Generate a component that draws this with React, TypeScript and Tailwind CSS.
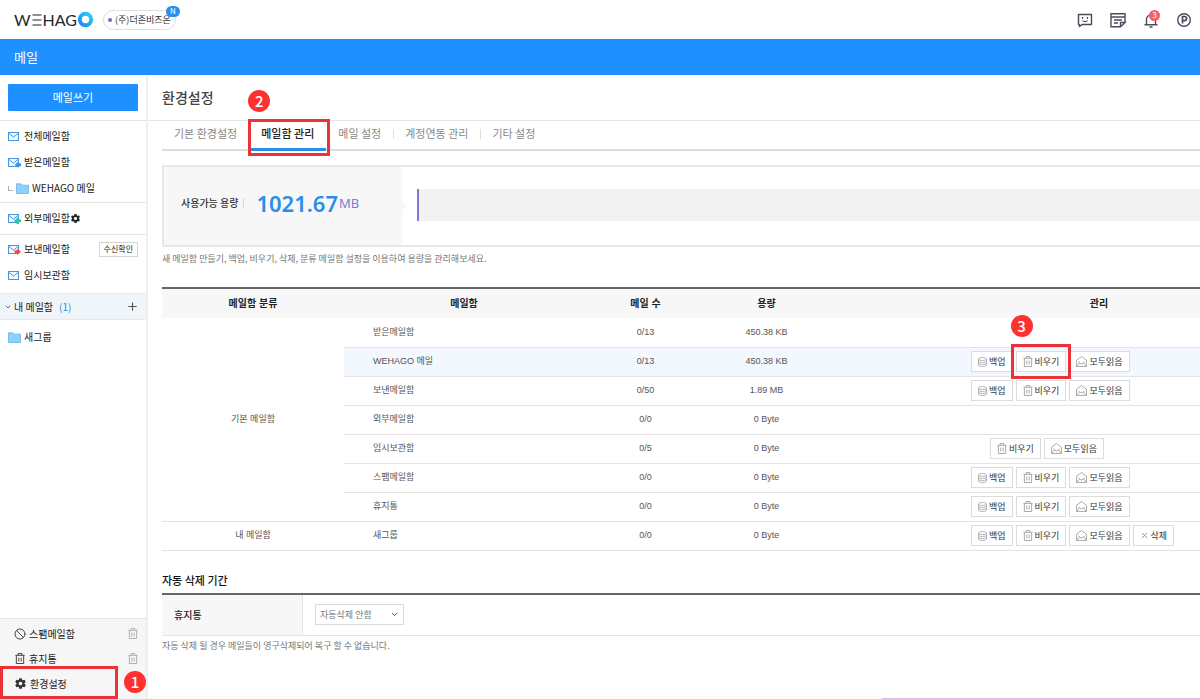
import { type ReactNode } from "react";
import clsx from "clsx";
import { Plus, ChevronDown, Ban, X } from "lucide-react";
import { IoMdSettings } from "react-icons/io";

type MailBadge = "none" | "in" | "external" | "out";

interface Mailbox {
  nome: string;
  count: string;
  size: string;
  actions: string[];
  active?: boolean;
}

const basicBoxes: Mailbox[] = [
  { nome: "받은메일함", count: "0/13", size: "450.38 KB", actions: [] },
  { nome: "WEHAGO 메일", count: "0/13", size: "450.38 KB", actions: ["백업", "비우기", "모두읽음"], active: true },
  { nome: "보낸메일함", count: "0/50", size: "1.89 MB", actions: ["백업", "비우기", "모두읽음"] },
  { nome: "외부메일함", count: "0/0", size: "0 Byte", actions: [] },
  { nome: "임시보관함", count: "0/5", size: "0 Byte", actions: ["비우기", "모두읽음"] },
  { nome: "스팸메일함", count: "0/0", size: "0 Byte", actions: ["백업", "비우기", "모두읽음"] },
  { nome: "휴지통", count: "0/0", size: "0 Byte", actions: ["백업", "비우기", "모두읽음"] },
];

const myBoxes: Mailbox[] = [
  { nome: "새그룹", count: "0/0", size: "0 Byte", actions: ["백업", "비우기", "모두읽음", "삭제"] },
];

const tabs = ["기본 환경설정", "메일함 관리", "메일 설정", "계정연동 관리", "기타 설정"];

function MailIcon({ badge = "none" }: { badge?: MailBadge }) {
  return (
    <svg width="13" height="11" viewBox="0 0 13 11" fill="none" className="shrink-0">
      <rect x="0.5" y="1.5" width="10" height="8" stroke="#4a94dc" fill="#f4faff" />
      <path d="M1 2.5l4.5 3.6L10 2.5" stroke="#4a94dc" />
      {badge === "in" && <path d="M13 6.3h-2.6V4.5L6.600 7.700l3.800 3.200V9.300H13z" fill="#2f9bea" />}
      {badge === "external" && <path d="M8.500 4.500h2.500v2h2V9h-2v2H8.500V9h-2V6.500h2z" fill="#1fc7a6" />}
      {badge === "out" && <path d="M6.600 6.300h2.600V4.500l3.800 3.200-3.800 3.200V9.300H6.600z" fill="#f04848" />}
    </svg>
  );
}

function FolderIcon() {
  return (
    <svg width="13" height="11" viewBox="0 0 13 11" className="shrink-0">
      <path d="M.5.8h4.3l1 1.4h6.7v8.3H.5z" fill="#8fd0fb" stroke="#62b4ee" strokeWidth="0.8" />
    </svg>
  );
}

function TrashIcon({ className }: { className?: string }) {
  return (
    <svg width="10" height="11" viewBox="0 0 11 12" fill="none" stroke="currentColor" className={clsx("shrink-0", className)}>
      <path d="M.5 2.5h10M3.5 2.5v-2h4v2M1.5 2.5v9h8v-9M4.2 5v4.3M6.8 5v4.3" />
    </svg>
  );
}

function DiskIcon() {
  return (
    <svg width="9" height="10" viewBox="0 0 9 10" fill="none" stroke="#a5a5a5" strokeWidth="0.8" className="shrink-0">
      <ellipse cx="4.5" cy="2" rx="4" ry="1.5" />
      <path d="M.5 2v6c0 .8 1.8 1.5 4 1.5s4-.7 4-1.5V2M.5 4c0 .8 1.8 1.5 4 1.5s4-.7 4-1.5M.5 6c0 .8 1.8 1.5 4 1.5s4-.7 4-1.5" />
    </svg>
  );
}

function OpenMailIcon() {
  return (
    <svg width="11" height="11" viewBox="0 0 12 12" fill="none" stroke="#999" strokeWidth="0.9" className="shrink-0">
      <path d="M.6 4.600L6 .6l5.400 4v6.800H.6z" />
      <path d="M.6 11.400L4 7.500M11.400 11.400L8 7.500M2.500 6.500L4 7.500l2 1.500 2-1.500 1.500-1" />
    </svg>
  );
}

function StepBadge({ n, className }: { n: number; className: string }) {
  return (
    <span className={clsx("absolute z-10 flex size-[22px] items-center justify-center rounded-full bg-[#ff3030] pb-px text-[15px] leading-none font-medium text-white", className)}>
      {n}
    </span>
  );
}

function HighlightBox({ className }: { className: string }) {
  return <span className={clsx("pointer-events-none absolute z-10 border-[3px] border-[#ec3236]", className)} />;
}

function ActionButton({ label, marked }: { label: string; marked?: boolean }) {
  return (
    <span className="relative flex">
      <button type="button" className="flex h-[21px] items-center gap-[2px] border border-[#dcdcdc] bg-white px-[6px] text-[9px] whitespace-nowrap text-[#333]">
        {label === "백업" && <DiskIcon />}
        {label === "비우기" && <TrashIcon className="text-[#a0a0a0]" />}
        {label === "모두읽음" && <OpenMailIcon />}
        {label === "삭제" && <X size={9} color="#777" />}
        {label}
      </button>
      {marked && (
        <>
          <HighlightBox className="-inset-x-[5px] -inset-y-[7px]" />
          <StepBadge n={3} className="-top-[36px] -left-[5px]" />
        </>
      )}
    </span>
  );
}

function MailboxRow({ box, group, span }: { box: Mailbox; group?: string; span?: number }) {
  const cell = clsx("border-b border-[#e4e4e4] p-0", box.active && "bg-[#f2f8fe]");
  return (
    <tr className="h-[29px]">
      {group && (
        <td rowSpan={span} className="border-b border-[#e4e4e4] p-0 text-center">{group}</td>
      )}
      <td className={clsx(cell, "pl-[29px]")}>{box.nome}</td>
      <td className={clsx(cell, "text-center")}>{box.count}</td>
      <td className={clsx(cell, "text-center")}>{box.size}</td>
      <td className={clsx(cell, box.actions.includes("백업") ? "pl-[145px]" : "pl-[164px]")}>
        <div className="flex gap-[3px] font-['Noto_Sans_CJK_KR',sans-serif]">
          {box.actions.map((a) => (
            <ActionButton key={a} label={a} marked={box.active && a === "비우기"} />
          ))}
        </div>
      </td>
    </tr>
  );
}

function SideItem({ icon, label, children, className }: { icon: ReactNode; label: string; children?: ReactNode; className?: string }) {
  return (
    <li className={clsx("flex items-center pr-2", className ?? "h-[26px] pl-2")}>
      <a href="#" className="flex items-center gap-[3px]">
        {icon}
        {label}
      </a>
      {children}
    </li>
  );
}

function TopBar() {
  return (
    <header className="flex h-[39px] items-center justify-between bg-white pr-[7px] pl-[14px]">
      <div className="flex items-center gap-[9px]">
        <a href="#" aria-label="WEHAGO" className="flex items-center font-[Lato] text-[16px] leading-none text-[#26262c]">
          <span>W</span>
          <svg width="12" height="12" viewBox="0 0 12 12" stroke="#26262c" strokeWidth="1.2">
            <path d="M1.500 1h9M1.500 6h9M1.500 11h9" />
          </svg>
          <span>HAG</span>
          <svg width="17" height="17" viewBox="0 0 17 17" fill="none">
            <defs>
              <linearGradient id="ring" x1="0" y1="1" x2="1" y2="0">
                <stop offset="0" stopColor="#1e86f5" />
                <stop offset="1" stopColor="#2fd0f5" />
              </linearGradient>
            </defs>
            <circle cx="8.5" cy="8.5" r="5.7" stroke="url(#ring)" strokeWidth="4" />
          </svg>
        </a>
        <button type="button" className="relative flex h-5 items-center gap-[3px] rounded-full border border-[#dedede] px-1 text-[9px] text-[#333]">
          <span className="size-1 rounded-full bg-[#7565d8]" />
          (주)더존비즈온
          <span className="absolute -top-[5px] -right-[5px] flex h-[11px] w-[14px] items-center justify-center rounded-full bg-[#2b8df0] text-[8px] leading-none text-white">N</span>
        </button>
      </div>
      <div className="flex items-center gap-[15px] text-[#4b4b5c]">
        <button type="button" aria-label="메신저">
          <svg width="18" height="18" viewBox="0 0 18 18" fill="none" stroke="currentColor" strokeWidth="1.4">
            <path d="M2.5 3.5h13v10H6l-2.500 2v-2h-1z" strokeLinejoin="round" />
            <path d="M6.5 6v2M11.500 6v2M6.500 9.500c1 1.500 4 1.500 5 0" strokeWidth="1.2" />
          </svg>
        </button>
        <button type="button" aria-label="메모">
          <svg width="18" height="18" viewBox="0 0 18 18" fill="none" stroke="currentColor" strokeWidth="1.4">
            <path d="M16 11.500V2.700H2v13h9.500L16 11.500h-4.500v4M2 6h14M5 9h8M5 12h4" />
          </svg>
        </button>
        <button type="button" aria-label="알림" className="relative">
          <svg width="18" height="18" viewBox="0 0 18 18" fill="none" stroke="currentColor" strokeWidth="1.4">
            <path d="M4.500 13.500V8.500a4.500 4.500 0 0 1 9 0v5M2.500 13.700h13M7.500 16h3M9 2.500V4" />
          </svg>
          <span className="absolute -top-px left-[7px] flex size-[11px] items-center justify-center rounded-full bg-[#f75f66] text-[8px] leading-none text-white">3</span>
        </button>
        <button type="button" aria-label="포인트">
          <svg width="18" height="18" viewBox="0 0 18 18" fill="none" stroke="currentColor" strokeWidth="1.4">
            <circle cx="9" cy="9" r="6.3" />
            <path d="M7.500 12.500v-7h2a2.100 2.100 0 0 1 0 4.200h-2" strokeWidth="1.7" />
          </svg>
        </button>
      </div>
    </header>
  );
}

function Sidebar() {
  return (
    <aside className="flex w-[148px] shrink-0 flex-col border-r-2 border-[#efefef] text-[10px] text-[#222]">
      <div className="border-b border-[#e4e4e4] px-2 py-[9px]">
        <button type="button" className="h-[27px] w-full rounded-[1px] bg-[#1e90ff] text-[11px] text-white">메일쓰기</button>
      </div>
      <ul className="border-b border-[#e4e4e4] pt-[2px] pb-px">
        <SideItem icon={<MailIcon />} label="전체메일함" />
        <SideItem icon={<MailIcon badge="in" />} label="받은메일함" />
        <SideItem
          icon={
            <>
              <span className="size-[5px] border-b border-l border-[#b0b0b0]" />
              <FolderIcon />
            </>
          }
          label="WEHAGO 메일"
        />
      </ul>
      <ul className="border-b border-[#e4e4e4] pt-[2px] pb-[3px]">
        <SideItem icon={<MailIcon badge="external" />} label="외부메일함">
          <button type="button" aria-label="외부메일함 설정">
            <IoMdSettings size={11} />
          </button>
        </SideItem>
      </ul>
      <ul className="pt-px pb-[5px]">
        <SideItem icon={<MailIcon badge="out" />} label="보낸메일함">
          <button type="button" className="ml-auto h-[15px] border border-[#d4d4d4] px-1 text-[8px] leading-none">수신확인</button>
        </SideItem>
        <SideItem icon={<MailIcon />} label="임시보관함" />
      </ul>
      <div className="flex h-[27px] items-center border-y border-[#e4e8ec] bg-[#f0f5f9] pr-[7px] pl-1">
        <ChevronDown size={8} />
        <span className="ml-[2px]">내 메일함</span>
        <span className="ml-[6px] text-[#2b8ee6]">(1)</span>
        <button type="button" aria-label="메일함 추가" className="ml-auto">
          <Plus size={13} color="#555" />
        </button>
      </div>
      <ul className="pt-1">
        <SideItem icon={<FolderIcon />} label="새그룹" />
      </ul>
      <ul className="mt-auto border-t border-[#e8e8e8] bg-[#f6f6f6] pt-[2px] pb-[3px]">
        <SideItem icon={<Ban size={12} color="#444" />} label="스팸메일함" className="h-[25px] pl-[14px]">
          <button type="button" aria-label="스팸메일함 비우기" className="ml-auto"><TrashIcon className="text-[#aaa]" /></button>
        </SideItem>
        <SideItem icon={<TrashIcon className="w-3 text-[#333]" />} label="휴지통" className="h-[25px] pl-[14px]">
          <button type="button" aria-label="휴지통 비우기" className="ml-auto"><TrashIcon className="text-[#aaa]" /></button>
        </SideItem>
        <SideItem icon={<IoMdSettings size={13} color="#333" />} label="환경설정" className="relative h-[25px] pl-[14px]">
          <HighlightBox className="-top-[5px] -bottom-[3px] left-0 w-[118px]" />
          <StepBadge n={1} className="top-0 left-[124px]" />
        </SideItem>
      </ul>
    </aside>
  );
}

export default function App() {
  return (
    <div className="flex min-h-screen flex-col overflow-x-hidden bg-white font-['Noto_Sans_CJK_KR',sans-serif] text-[10px] leading-none text-[#222]">
      <TopBar />
      <div className="flex h-9 items-center bg-[#1e90ff] px-[14px] pb-[2px] text-[13px] text-white">메일</div>

      <div className="flex flex-1">
        <Sidebar />

        <main className="flex min-w-0 flex-1 flex-col">
          <div className="flex h-[46px] items-center border-b border-[#e4e4e4] pb-[2px] pl-[14px]">
            <h1 className="text-[14px] font-medium text-[#444]">환경설정</h1>
          </div>

          <div className="flex flex-1 flex-col pl-[14px]">
            <nav className="flex h-[30px] border-b-2 border-[#dcdcdc] text-[11px] text-[#888]">
              {tabs.map((t, i) => (
                <a
                  key={t}
                  href="#"
                  className={clsx(
                    "relative -mb-[2px] flex items-center px-3",
                    i === 1 ? "border-b-[3px] border-[#2b8ee6] pb-[2px] font-medium text-[#222]" : "pb-[5px]"
                  )}
                >
                  {t}
                  {(i === 2 || i === 3) && <span className="absolute -right-px h-[10px] w-px bg-[#dedede]" />}
                  {i === 1 && (
                    <>
                      <HighlightBox className="-top-[2px] -right-1 -bottom-2 -left-px" />
                      <StepBadge n={2} className="-top-[31px] -left-px" />
                    </>
                  )}
                </a>
              ))}
            </nav>

            <section className="mt-[14px] flex h-[82px] items-stretch border-2 border-r-0 border-[#e8e8e8]">
              <div className="relative flex w-[238px] items-center bg-[#f7f7f7] pb-[6px] pl-[17px]">
                <span className="border-r border-[#d8d8d8] pr-[5px] font-medium text-[#333]">사용가능 용량</span>
                <strong className="ml-3 font-['Noto_Sans'] text-[22px] font-semibold text-[#2b8ee6]">1021.67</strong>
                <span className="ml-px font-['Noto_Sans'] text-[13px] text-[#8078d8]">MB</span>
                <span className="absolute top-[34px] -right-[5px] border-y-[5px] border-l-[5px] border-y-transparent border-l-[#f7f7f7]" />
              </div>
              <div className="flex flex-1 items-center pb-[2px] pl-[15px]">
                <div className="h-8 w-full border-l-2 border-[#8078d8] bg-[#f2f2f2]" />
              </div>
            </section>
            <p className="mt-[7px] text-[9px] text-[#777]">새 메일함 만들기, 백업, 비우기, 삭제, 분류 메일함 설정을 이용하여 용량을 관리해보세요.</p>

            <table className="mt-[24px] w-full table-fixed border-collapse font-['Liberation_Sans','Noto_Sans_CJK_KR',sans-serif] text-[9px] text-[#555]">
              <colgroup>
                <col className="w-[182px]" />
                <col className="w-[240px]" />
                <col className="w-[123px]" />
                <col className="w-[119px]" />
                <col />
              </colgroup>
              <thead>
                <tr className="h-[30px] border-t-2 border-[#666] bg-[#f7f7f7] text-[10px] text-[#222]">
                  <th className="p-0 font-bold">메일함 분류</th>
                  <th className="p-0 font-bold">메일함</th>
                  <th className="p-0 font-bold">메일 수</th>
                  <th className="p-0 font-bold">용량</th>
                  <th className="p-0 pl-[172px] font-bold">관리</th>
                </tr>
              </thead>
              <tbody>
                {basicBoxes.map((b, i) => (
                  <MailboxRow key={b.nome} box={b} group={i === 0 ? "기본 메일함" : undefined} span={basicBoxes.length} />
                ))}
                {myBoxes.map((b) => (
                  <MailboxRow key={b.nome} box={b} group="내 메일함" span={1} />
                ))}
              </tbody>
            </table>

            <h2 className="mt-6 text-[11px] font-medium text-[#111]">자동 삭제 기간</h2>
            <div className="mt-[7px] flex h-[43px] border-t-2 border-b border-t-[#666] border-b-[#e4e4e4]">
              <label htmlFor="auto-delete" className="flex w-[141px] items-center border-r border-[#e4e4e4] bg-[#f7f7f7] pl-3 font-medium">휴지통</label>
              <div className="flex items-center pl-3">
                <div className="relative flex items-center">
                  <select id="auto-delete" className="h-[21px] w-[89px] appearance-none border border-[#dcdcdc] bg-white pl-1 text-[9px] text-[#777]">
                    <option>자동삭제 안함</option>
                  </select>
                  <ChevronDown size={9} className="pointer-events-none absolute right-[5px]" />
                </div>
              </div>
            </div>
            <p className="mt-[5px] text-[9px] text-[#777]">자동 삭제 될 경우 메일들이 영구삭제되어 복구 할 수 없습니다.</p>
            <div className="mt-auto ml-auto h-px w-[318px] bg-[#cfc2e6]" />
          </div>
        </main>
      </div>
    </div>
  );
}
